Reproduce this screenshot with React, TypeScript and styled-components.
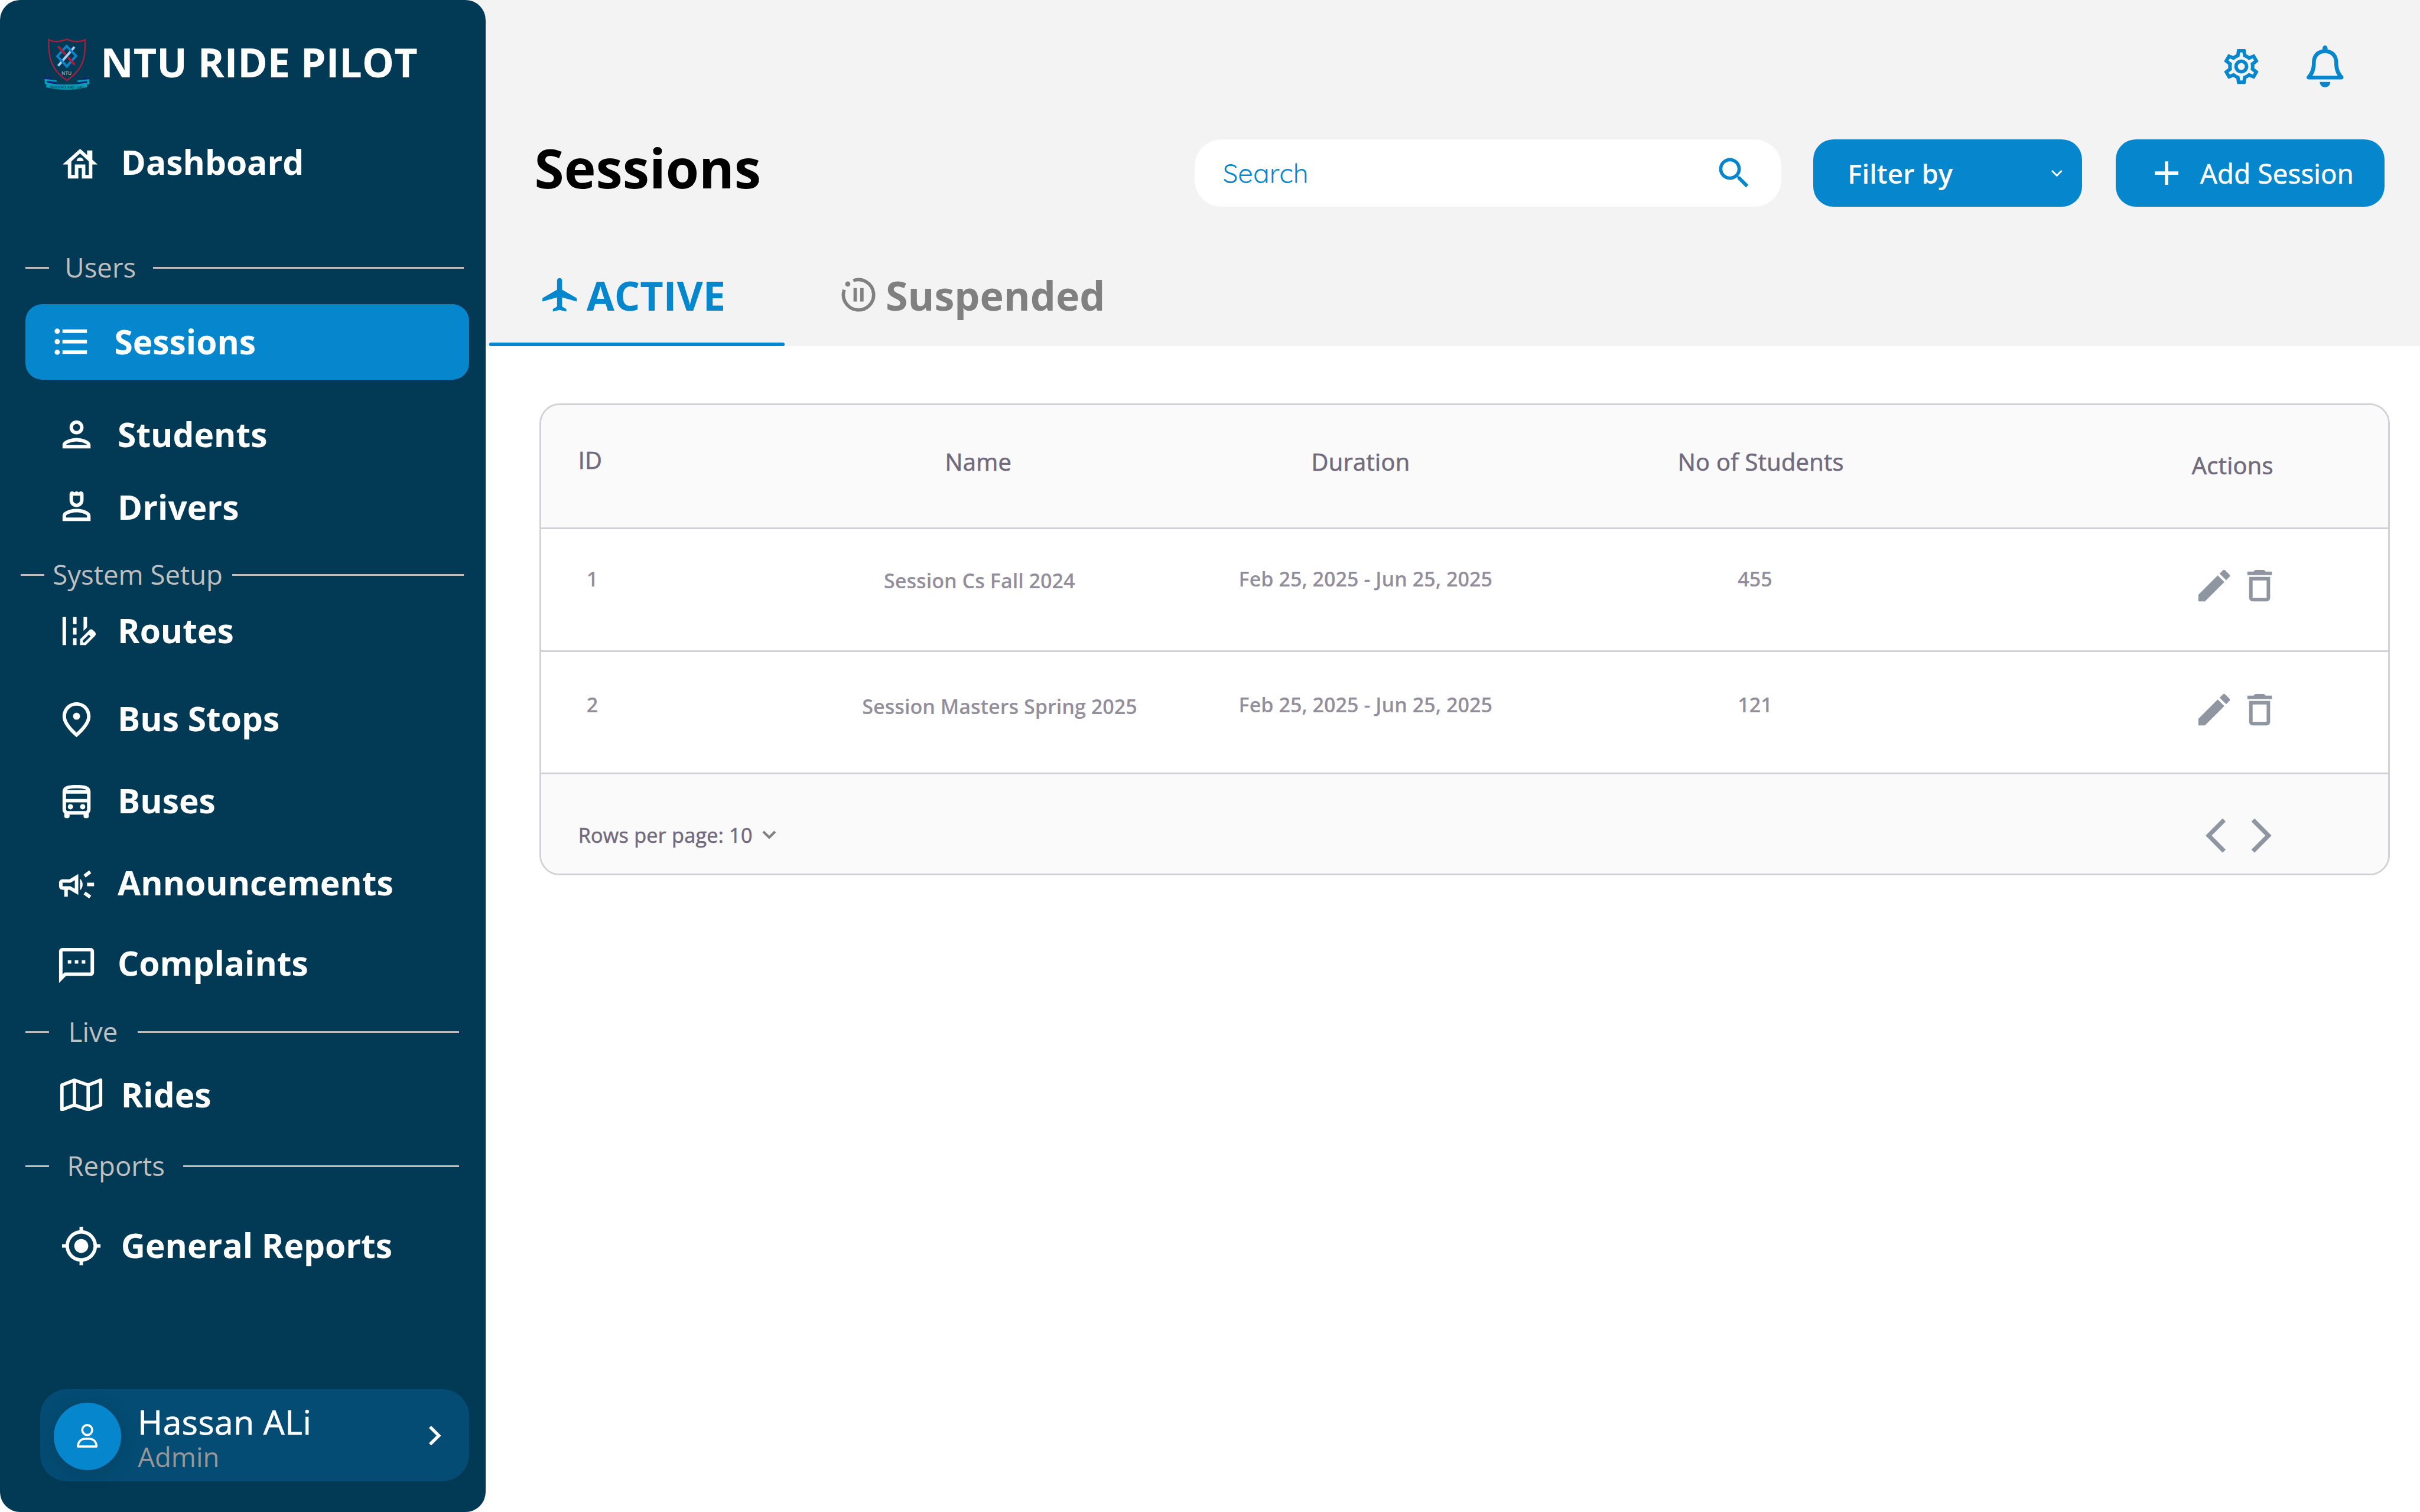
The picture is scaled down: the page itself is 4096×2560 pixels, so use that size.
import React from 'react';
import styled, { createGlobalStyle } from 'styled-components';
import {
  MdAdd,
  MdDeleteOutline,
  MdEdit,
  MdFormatListBulleted,
  MdMyLocation,
  MdOutlineCampaign,
  MdOutlineDirectionsBus,
  MdOutlineEditRoad,
  MdOutlineFmdGood,
  MdOutlineHouse,
  MdOutlinePerson,
  MdOutlinePerson4,
  MdOutlineSettings,
  MdOutlineSms,
  MdSearch,
} from 'react-icons/md';

/* The design grid is 1440 x 900 units; u() converts units to pixels. */
const u = (n: number) => `${Math.round(((n * 4096) / 1440) * 100) / 100}px`;

const color = {
  navy: '#023a55',
  card: '#044c73',
  blue: '#0687cd',
  header: '#f3f3f3',
  line: '#d2d1d7',
  head: '#716b7d',
  cell: '#928e9b',
  icon: '#8f96a1',
  label: '#bfbfbf',
};

const GlobalStyle = createGlobalStyle`
  * { box-sizing: border-box; }
  html, body { margin: 0; padding: 0; background: #fff; }
  body { font-family: "Open Sans", "Noto Sans", sans-serif; overflow: hidden; }
  svg { display: block; flex: none; }
`;

const Page = styled.div`
  display: flex;
  width: 4096px;
  height: 2560px;
  background: #fff;
`;

/* ---------- sidebar ---------- */

const Sidebar = styled.aside`
  position: relative;
  z-index: 1;
  flex: none;
  display: flex;
  flex-direction: column;
  width: ${u(289)};
  height: 100%;
  padding-top: ${u(20.9)};
  border-radius: ${u(12)};
  background: ${color.navy};
  color: #fff;
`;

const Brand = styled.div`
  display: flex;
  align-items: center;
  gap: ${u(6.9)};
  height: ${u(32)};
  padding-left: ${u(26.25)};
  font-size: ${u(24)};
  line-height: ${u(32)};
  font-weight: 700;
  white-space: nowrap;

  svg {
    width: ${u(26.75)};
    height: ${u(30.6)};
    margin-top: ${u(2.7)};
  }
`;

const NavItem = styled.a<{ $mt: number; $icon: number; $text: number; $drop?: number; $active?: boolean }>`
  display: grid;
  grid-template-columns: ${p => u(p.$text - p.$icon)} 1fr;
  align-items: center;
  flex: none;
  height: ${p => u(p.$active ? 45 : 28)};
  margin-top: ${p => u(p.$mt)};
  margin-left: ${p => u(p.$active ? 15 : 0)};
  width: ${p => u(p.$active ? 264 : 289)};
  padding-left: ${p => u(p.$icon - (p.$active ? 15 : 0))};
  border-radius: ${p => u(p.$active ? 10 : 0)};
  background: ${p => (p.$active ? color.blue : 'transparent')};
  font-size: ${u(20)};
  line-height: ${u(28)};
  font-weight: 700;
  white-space: nowrap;

  span {
    padding-top: ${p => u(p.$active ? 0.3 : 0.4)};
  }

  svg {
    margin-top: ${p => u((p.$drop ?? 0) * 2)};
  }
`;

const GroupLabel = styled.div<{ $mt: number; $start: number; $text: number; $line: number; $end: number }>`
  display: grid;
  grid-template-columns: ${p => u(p.$text - p.$start)} ${p => u(p.$line - p.$text)} 1fr;
  align-items: center;
  flex: none;
  height: ${u(22)};
  margin-top: ${p => u(p.$mt)};
  padding-left: ${p => u(p.$start)};
  padding-right: ${p => u(289 - p.$end)};
  font-size: ${u(16)};
  line-height: ${u(22)};
  color: ${color.label};
  white-space: nowrap;
`;

const Rule = styled.i<{ $short?: boolean }>`
  width: ${p => (p.$short ? u(14.1) : 'auto')};
  height: 3px;
  margin-top: ${u(0.8)};
  background: #c1bdbe;
`;

const UserCard = styled.div`
  display: flex;
  align-items: center;
  flex: none;
  width: ${u(255)};
  height: ${u(55)};
  margin: ${u(72)} 0 0 ${u(24)};
  padding: 0 ${u(16.5)} 0 ${u(8)};
  border-radius: ${u(16)};
  background: ${color.card};
`;

const Avatar = styled.span`
  display: flex;
  align-items: center;
  justify-content: center;
  width: ${u(40)};
  height: ${u(40)};
  margin-top: ${u(1)};
  border-radius: 50%;
  background: ${color.blue};
  box-shadow: 0 ${u(2)} ${u(10)} rgba(0, 40, 60, 0.22);
`;

const UserText = styled.div`
  flex: 1;
  margin-left: ${u(10)};
  padding-top: ${u(3)};
  white-space: nowrap;
`;

const UserName = styled.div`
  font-size: ${u(20)};
  line-height: ${u(22)};
  letter-spacing: 0.009em;
  -webkit-text-stroke: 0.012em currentColor;
`;

const UserRole = styled.div`
  font-size: ${u(16)};
  line-height: ${u(19)};
  color: #979797;
`;

/* ---------- main ---------- */

const Main = styled.main`
  flex: 1;
  min-width: 0;
`;

const Header = styled.header`
  height: ${u(206)};
  margin-left: ${u(-20)};
  padding: ${u(27)} 0 0 ${u(20)};
  background: ${color.header};
`;

const TopIcons = styled.div`
  display: flex;
  justify-content: flex-end;
  gap: ${u(26.5)};
  height: ${u(25)};
  padding-right: ${u(45.5)};
  color: ${color.blue};
`;

const Toolbar = styled.div`
  display: flex;
  align-items: center;
  height: ${u(40)};
  margin-top: ${u(31)};
  padding: 0 ${u(21)} 0 ${u(29)};
`;

const Title = styled.h1`
  flex: 1;
  margin: ${u(-5.8)} 0 0;
  font-size: ${u(32)};
  line-height: ${u(44)};
  font-weight: 700;
  color: #000;
`;

const SearchBox = styled.div`
  display: flex;
  align-items: center;
  justify-content: space-between;
  width: ${u(349)};
  height: ${u(40)};
  margin-right: ${u(-0.8)};
  padding: 0 ${u(16)} 0 ${u(16.8)};
  border-radius: ${u(16)};
  background: #fff;
  color: ${color.blue};
  font-family: Quicksand, Lato, "Open Sans", sans-serif;
  font-size: ${u(16)};
  line-height: ${u(20)};
`;

const Button = styled.button<{ $bold?: boolean; $left: number; $right: number }>`
  display: flex;
  align-items: center;
  justify-content: space-between;
  width: ${u(160)};
  height: ${u(40)};
  margin: 0 0 0 ${u(20)};
  padding: 0 ${p => u(p.$right)} 0 ${p => u(p.$left)};
  border: 0;
  border-radius: ${u(12)};
  background: ${color.blue};
  color: #fff;
  font-family: inherit;
  font-size: ${u(16)};
  line-height: ${u(22)};
  font-weight: ${p => (p.$bold ? 600 : 400)};
  letter-spacing: ${p => (p.$bold ? '0' : '0.006em')};
  -webkit-text-stroke: ${p => (p.$bold ? '0' : '0.015em')} currentColor;
  white-space: nowrap;
`;

const Tabs = styled.nav`
  display: flex;
  margin-top: ${u(22)};
  padding-left: ${u(2)};
`;

const Tab = styled.div<{ $active?: boolean }>`
  width: ${p => (p.$active ? u(176) : 'auto')};
  color: ${p => (p.$active ? color.blue : '#808080')};
`;

const TabLabel = styled.div<{ $left: number }>`
  display: flex;
  align-items: center;
  gap: ${u(4)};
  height: ${u(59)};
  padding: ${u(2.2)} 0 0 ${p => u(p.$left)};
  font-size: ${u(24)};
  line-height: ${u(32)};
  font-weight: 700;
  white-space: nowrap;
`;

const Underline = styled.div`
  height: ${u(2)};
  border-radius: ${u(1)};
  background: ${color.blue};
`;

/* ---------- table ---------- */

const Table = styled.section`
  width: ${u(1101)};
  height: ${u(281)};
  margin: ${u(34)} 0 0 ${u(32)};
  border: 3px solid ${color.line};
  border-radius: ${u(12)};
  overflow: hidden;
`;

const Row = styled.div<{ $head?: boolean }>`
  display: grid;
  grid-template-columns: ${u(140)} ${u(241)} ${u(214)} ${u(262)} ${u(242)};
  height: ${p => u(p.$head ? 74 : 73)};
  border-bottom: 3px solid ${color.line};
  background: ${p => (p.$head ? '#fafafa' : '#fff')};
  color: ${p => (p.$head ? color.head : color.cell)};
  font-size: ${p => u(p.$head ? 14 : 12)};
  font-weight: ${p => (p.$head ? 400 : 600)};
  letter-spacing: ${p => (p.$head ? '0.008em' : '0')};
  -webkit-text-stroke: ${p => (p.$head ? '0.018em' : '0')} currentColor;
  line-height: ${u(20)};
  white-space: nowrap;
`;

/* $mid is the vertical centre of the content inside the row. */
const Cell = styled.div<{ $mid: number; $left?: number; $right?: number; $start?: boolean }>`
  display: flex;
  justify-content: ${p => (p.$start ? 'flex-start' : 'center')};
  padding: ${p => u(p.$mid - 9.7)} ${p => u(p.$right ?? 0)} 0 ${p => u(p.$left ?? 0)};
`;

const Actions = styled.div<{ $mid: number }>`
  display: flex;
  gap: ${u(2)};
  padding: ${p => u(p.$mid - 12.5)} 0 0 ${u(126)};
  color: ${color.icon};
`;

const Footer = styled.footer`
  display: flex;
  align-items: center;
  justify-content: space-between;
  height: ${u(59)};
  padding: ${u(13.5)} ${u(69.2)} 0 ${u(22)};
  background: #fafafa;
  color: ${color.head};
  font-size: ${u(12)};
  line-height: ${u(18)};
  letter-spacing: 0.008em;
  -webkit-text-stroke: 0.018em currentColor;
`;

const RowsPerPage = styled.span`
  display: flex;
  align-items: center;
  gap: ${u(5.5)};

  svg {
    margin-top: ${u(-1)};
  }
`;

const Pager = styled.span`
  display: flex;
  gap: ${u(13.6)};
`;

/* ---------- drawings ---------- */

const I = (n: number) => ({ width: u(n), height: u(n) });

const Crest = () => (
  <svg viewBox="75 65 321 367" fill="none">
    <path
      d="M107 73C135 92 190 92 238 71C280 92 335 92 366 75C369 190 362 280 237 365C112 285 104 180 107 73Z"
      stroke="#a51f3c"
      strokeWidth="10"
    />
    <path d="M290 126L174 261" stroke="#a9cdf5" strokeWidth="17" />
    <path d="M234 120L302 190L236 265L168 192Z" stroke="#0f83c6" strokeWidth="17" />
    <path d="M173 121L293 253" stroke="#a51f3c" strokeWidth="17" />
    <path d="M257 166L212 216" stroke="#023a55" strokeWidth="26" />
    <path d="M257 166L212 216" stroke="#a9cdf5" strokeWidth="17" />
    <text x="197" y="325" fontSize="38" textLength="73" lengthAdjust="spacingAndGlyphs" fontFamily="Open Sans" fontWeight="600" fill="#b3a98f">
      NTU
    </text>
    <path d="M78 343L116 340V362L78 356ZM394 345L356 345V364L394 356Z" fill="#17207e" />
    <path d="M77 355L162 364V378L92 372V392H78ZM396 356L312 366V380L380 374V394H396Z" fill="#06a0bb" />
    <path d="M93 368L160 376V390L93 386ZM380 370L310 378V392L380 386Z" fill="#17207e" />
    <path d="M92 378C150 396 190 394 237 394C290 394 330 392 378 380L382 412C330 428 290 431 237 431C180 431 140 427 88 414Z" fill="#06a0bb" />
    <text x="113" y="422" fontSize="27" textLength="244" lengthAdjust="spacingAndGlyphs" fontFamily="Open Sans" fontWeight="700" fill="#0b4a68">
      INNOVATE AND LEAD
    </text>
  </svg>
);

const FoldedMap = () => (
  <svg viewBox="0 0 25 19.6" style={{ width: u(25), height: u(19.6) }} fill="none" stroke="#fff" strokeWidth="2" strokeLinejoin="round">
    <path d="M1 3.9L8.4 1L16.6 3.9L24 1V15.8L16.6 18.6L8.4 15.8L1 18.6ZM8.4 1V15.8M16.6 3.9V18.6" />
  </svg>
);

const Person = () => (
  <svg viewBox="0 0 12.4 14.2" style={{ width: u(12.4), height: u(14.2) }} fill="none" stroke="#fff" strokeWidth="1.3" strokeLinejoin="round">
    <circle cx="6.2" cy="3.6" r="2.95" />
    <path d="M.7 13.4C.7 10.6 2.5 8.8 5 8.8H7.4C9.9 8.8 11.7 10.6 11.7 13.4Z" />
  </svg>
);

const Bell = () => (
  <svg viewBox="0 0 22 25" style={{ width: u(22), height: u(25) }} fill="currentColor">
    <path
      fillRule="evenodd"
      d="M11 0C10.1 0 9.45.8 9.45 2.4C5.6 3 3.2 6 3.2 10C3.2 13.8 2.2 15.9.3 18.2C-.4 19.3.2 20.2 1.4 20.2H20.6C21.8 20.2 22.4 19.3 21.7 18.2C19.8 15.9 18.8 13.8 18.8 10C18.8 6 16.4 3 12.55 2.4C12.55.8 11.9 0 11 0ZM11 4.6C7.7 4.6 5.5 6.8 5.5 10C5.5 13.7 4.8 16 3.5 18H18.5C17.2 16 16.5 13.7 16.5 10C16.5 6.8 14.3 4.6 11 4.6Z"
    />
    <path d="M7.8 21.7H14.2A3.2 3.2 0 0 1 7.8 21.7Z" />
  </svg>
);

const Plane = () => (
  <svg viewBox="0 0 24 24" style={I(24)} fill="currentColor">
    <path d="M22.2 16v-2L13.5 9V3.5C13.5 2.67 12.83 2 12 2s-1.5.67-1.5 1.5V9L1.8 14v2l8.7-2.5V19L8 20.5V22l4-1 4 1v-1.5L13.5 19v-5.5L22.2 16z" />
  </svg>
);

const Paused = () => (
  <svg viewBox="0 0 24 24" style={I(24)} fill="currentColor">
    <path d="M8.9 3.55A9 9 0 1 1 3.5 9" fill="none" stroke="currentColor" strokeWidth="2" />
    <circle cx="5.6" cy="5.6" r="1.55" />
    <path d="M9 8h2v8H9zM13 8h2v8h-2z" />
  </svg>
);

/* Open chevron; w and h are the extents of its centre line. */
const Chevron = ({ dir, w, h, sw, tint }: { dir: 'left' | 'right' | 'down'; w: number; h: number; sw: number; tint: string }) => {
  const p = sw * 0.72;
  const d = {
    left: `M${w + p} ${p}L${p} ${h / 2 + p}L${w + p} ${h + p}`,
    right: `M${p} ${p}L${w + p} ${h / 2 + p}L${p} ${h + p}`,
    down: `M${p} ${p}L${w / 2 + p} ${h + p}L${w + p} ${p}`,
  }[dir];
  return (
    <svg
      viewBox={`0 0 ${w + 2 * p} ${h + 2 * p}`}
      style={{ width: u(w + 2 * p), height: u(h + 2 * p) }}
      fill="none"
      stroke={tint}
      strokeWidth={sw}
    >
      <path d={d} />
    </svg>
  );
};

const Group = ({ name, ...rest }: { name: string; $mt: number; $start: number; $text: number; $line: number; $end: number }) => (
  <GroupLabel {...rest}>
    <Rule $short />
    <span>{name}</span>
    <Rule />
  </GroupLabel>
);

const sessions = [
  { id: '1', name: 'Session Cs Fall 2024', count: '455', mid: 29.3, shift: 0.6, icons: 33.5 },
  { id: '2', name: 'Session Masters Spring 2025', count: '121', mid: 31.3, shift: 24.6, icons: 34.4 },
];

export default function App() {
  return (
    <>
      <GlobalStyle />
      <Page>
        <Sidebar>
          <Brand>
            <Crest />
            NTU RIDE PILOT
          </Brand>
          <NavItem $mt={29.3} $icon={35} $text={72} $drop={1.4}>
            <MdOutlineHouse style={I(25)} />
            <span>Dashboard</span>
          </NavItem>
          <Group name="Users" $mt={37.8} $start={15} $text={38.5} $line={91.1} $end={276} />
          <NavItem $active $mt={11} $icon={30} $text={68}>
            <MdFormatListBulleted style={I(25)} />
            <span>Sessions</span>
          </NavItem>
          <NavItem $mt={18.3} $icon={33} $text={70} $drop={0.2}>
            <MdOutlinePerson style={I(25)} />
            <span>Students</span>
          </NavItem>
          <NavItem $mt={15.1} $icon={33} $text={70} $drop={0.2}>
            <MdOutlinePerson4 style={I(25)} />
            <span>Drivers</span>
          </NavItem>
          <Group name="System Setup" $mt={15.5} $start={12.2} $text={31.4} $line={138} $end={276} />
          <NavItem $mt={8.3} $icon={33} $text={70} $drop={0.2}>
            <MdOutlineEditRoad style={I(25)} />
            <span>Routes</span>
          </NavItem>
          <NavItem $mt={24.2} $icon={33} $text={70} $drop={1}>
            <MdOutlineFmdGood style={I(25)} />
            <span>Bus Stops</span>
          </NavItem>
          <NavItem $mt={20.9} $icon={33} $text={70} $drop={1.1}>
            <MdOutlineDirectionsBus style={I(25)} />
            <span>Buses</span>
          </NavItem>
          <NavItem $mt={21} $icon={33} $text={70} $drop={1.2}>
            <MdOutlineCampaign style={I(25)} />
            <span>Announcements</span>
          </NavItem>
          <NavItem $mt={19.9} $icon={33} $text={70} $drop={1.2}>
            <MdOutlineSms style={I(25)} />
            <span>Complaints</span>
          </NavItem>
          <Group name="Live" $mt={15.7} $start={15} $text={40.7} $line={82} $end={273} />
          <NavItem $mt={12.4} $icon={36} $text={72} $drop={0.2}>
            <FoldedMap />
            <span>Rides</span>
          </NavItem>
          <Group name="Reports" $mt={17.6} $start={15} $text={39.9} $line={109} $end={273} />
          <NavItem $mt={22.1} $icon={36} $text={72} $drop={0.5}>
            <MdMyLocation style={I(25)} />
            <span>General Reports</span>
          </NavItem>
          <UserCard>
            <Avatar>
              <Person />
            </Avatar>
            <UserText>
              <UserName>Hassan ALi</UserName>
              <UserRole>Admin</UserRole>
            </UserText>
            <Chevron dir="right" w={5.2} h={10.4} sw={1.9} tint="#fff" />
          </UserCard>
        </Sidebar>

        <Main>
          <Header>
            <TopIcons>
              <MdOutlineSettings style={I(25)} />
              <Bell />
            </TopIcons>
            <Toolbar>
              <Title>Sessions</Title>
              <SearchBox>
                Search
                <MdSearch style={I(24)} />
              </SearchBox>
              <Button $bold $left={20.4} $right={11.5}>
                Filter by
                <Chevron dir="down" w={5.8} h={2.9} sw={1} tint="#fff" />
              </Button>
              <Button $left={18.2} $right={18.4}>
                <MdAdd style={I(24)} />
                Add Session
              </Button>
            </Toolbar>
            <Tabs>
              <Tab $active>
                <TabLabel $left={30}>
                  <Plane />
                  ACTIVE
                </TabLabel>
                <Underline />
              </Tab>
              <Tab>
                <TabLabel $left={32}>
                  <Paused />
                  Suspended
                </TabLabel>
              </Tab>
            </Tabs>
          </Header>

          <Table>
            <Row $head>
              <Cell $start $left={22} $mid={32.6}>ID</Cell>
              <Cell $right={0.8} $mid={33.7}>Name</Cell>
              <Cell $right={0.8} $mid={33.7}>Duration</Cell>
              <Cell $right={0.6} $mid={33.7}>No of Students</Cell>
              <Cell $start $left={125.2} $mid={35.7}>Actions</Cell>
            </Row>
            {sessions.map(s => (
              <Row key={s.id}>
                <Cell $start $left={27} $mid={s.mid}>{s.id}</Cell>
                <Cell $left={s.shift} $mid={s.mid + 1}>{s.name}</Cell>
                <Cell $left={5} $mid={s.mid}>Feb 25, 2025 - Jun 25, 2025</Cell>
                <Cell $right={7.4} $mid={s.mid}>{s.count}</Cell>
                <Actions $mid={s.icons}>
                  <MdEdit style={I(25)} />
                  <MdDeleteOutline style={I(25)} />
                </Actions>
              </Row>
            ))}
            <Footer>
              <RowsPerPage>
                Rows per page: 10
                <Chevron dir="down" w={7} h={3.5} sw={1.45} tint="#808080" />
              </RowsPerPage>
              <Pager>
                <Chevron dir="left" w={9.2} h={18.6} sw={2.6} tint={color.icon} />
                <Chevron dir="right" w={9.2} h={18.6} sw={2.6} tint={color.icon} />
              </Pager>
            </Footer>
          </Table>
        </Main>
      </Page>
    </>
  );
}
